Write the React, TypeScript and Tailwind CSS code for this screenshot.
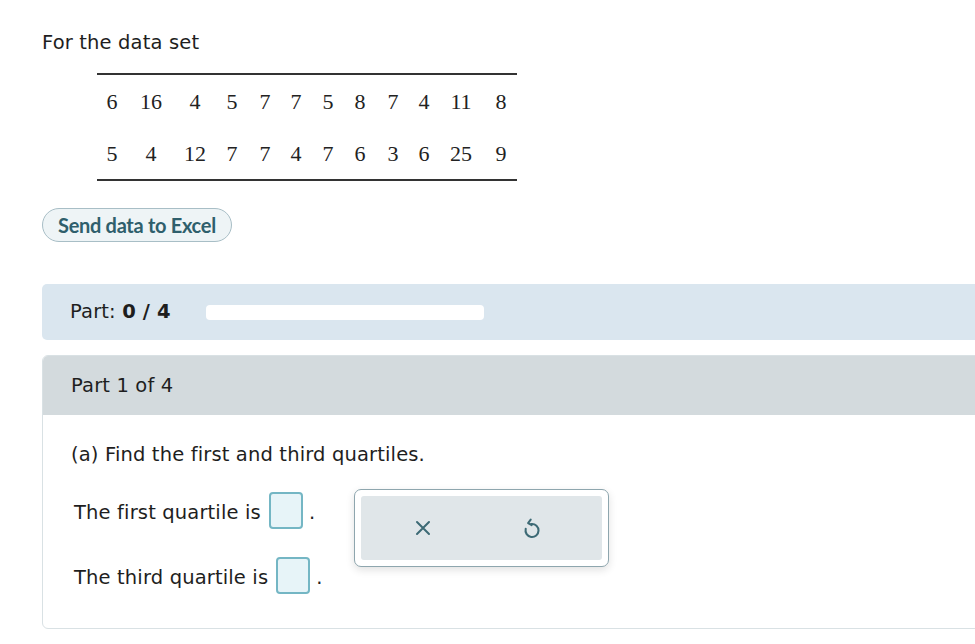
import React from "react";

const row1 = ["6", "16", "4", "5", "7", "7", "5", "8", "7", "4", "11", "8"];
const row2 = ["5", "4", "12", "7", "7", "4", "7", "6", "3", "6", "25", "9"];

function Cells({ values }: { values: string[] }) {
  return (
    <>
      {values.map((v, i) => (
        <div key={i} className="flex h-[52px] items-center justify-center">
          {v}
        </div>
      ))}
    </>
  );
}

function AnswerBox() {
  return (
    <span className="inline-block h-[37px] w-[34px] rounded-[4px] border-2 border-[#74b6c4] bg-[#e7f4f8]" />
  );
}

export default function App() {
  return (
    <div className="min-h-[644px] w-[975px] overflow-hidden bg-white font-['DejaVu_Sans',sans-serif] text-[19.5px] tracking-[0.15px] text-[#1e1e1e]">
      <div className="pl-[42px] pt-[31px]">
        <p className="leading-[24px]">For the data set</p>

        <div className="ml-[55px] mt-[18px] w-[420px] border-y-2 border-[#333]">
          <div className="grid grid-cols-[30px_48px_40px_34px_32px_30px_34px_30px_36px_26px_48px_32px] font-['Liberation_Serif',serif] text-[22px] tracking-normal text-[#222]">
            <Cells values={row1} />
            <Cells values={row2} />
          </div>
        </div>

        <button className="mt-[27px] flex h-[34px] items-center rounded-full border border-[#a8bec6] bg-[#eef4f6] px-[15px] font-['Lato',sans-serif] text-[20px] font-bold tracking-[-0.3px] text-[#2f5f6c]">
          Send data to Excel
        </button>

        <div className="mt-[42px] flex h-[56px] w-[960px] items-center rounded-l-[5px] bg-[#dae6ef] pl-[28px]">
          <span className="w-[136px] whitespace-nowrap leading-[24px]">
            Part: <b className="font-bold">0 / 4</b>
          </span>
          <div className="h-[15px] w-[278px] rounded-[4px] bg-white" />
        </div>

        <div className="mt-[15px] w-[960px] rounded-l-[6px] border border-[#d9e1e4]">
          <div className="flex h-[59px] items-center rounded-tl-[5px] bg-[#d3dadd] pl-[28px] leading-[24px]">
            Part 1 of 4
          </div>
          <div className="h-[213px] pl-[28px] pt-[28px]">
            <p className="leading-[24px]">(a) Find the first and third quartiles.</p>

            <div className="relative mt-[25px] pl-[3px]">
              <div className="flex h-[37px] items-center gap-[8px] leading-[24px]">
                <span className="pt-[5px]">The first quartile is</span>
                <AnswerBox />
                <span className="-ml-[2px] pt-[5px]">.</span>
              </div>
              <div className="mt-[28px] flex h-[37px] items-center gap-[8px] leading-[24px]">
                <span className="pt-[5px]">The third quartile is</span>
                <AnswerBox />
                <span className="-ml-[2px] pt-[5px]">.</span>
              </div>

              <div className="absolute left-[283px] top-[-3px] h-[78px] w-[255px] rounded-[7px] border-[1.5px] border-[#8ea6ae] bg-white p-[6px] shadow-[0_3px_8px_rgba(0,0,0,0.12)]">
                <div className="flex h-full items-center rounded-[3px] bg-[#e0e6e9]">
                  <div className="flex w-1/2 justify-center pl-[4px]">
                    <svg width="20" height="20" viewBox="0 0 20 20" fill="none" stroke="#3d6a75" strokeWidth="2" strokeLinecap="round">
                      <path d="M4 4 L16 16 M16 4 L4 16" />
                    </svg>
                  </div>
                  <div className="flex w-1/2 justify-center pr-[20px]">
                    <svg width="26" height="26" viewBox="0 0 24 24" fill="none" stroke="#3d6a75" strokeWidth="1.9" strokeLinecap="round" strokeLinejoin="round">
                      <path d="M11.5 8.3 A6 6 0 1 1 6.2 12.8" />
                      <path d="M10.8 4.3 L8.4 7.4 L11.7 9.3" />
                    </svg>
                  </div>
                </div>
              </div>
            </div>
          </div>
        </div>
      </div>
    </div>
  );
}
